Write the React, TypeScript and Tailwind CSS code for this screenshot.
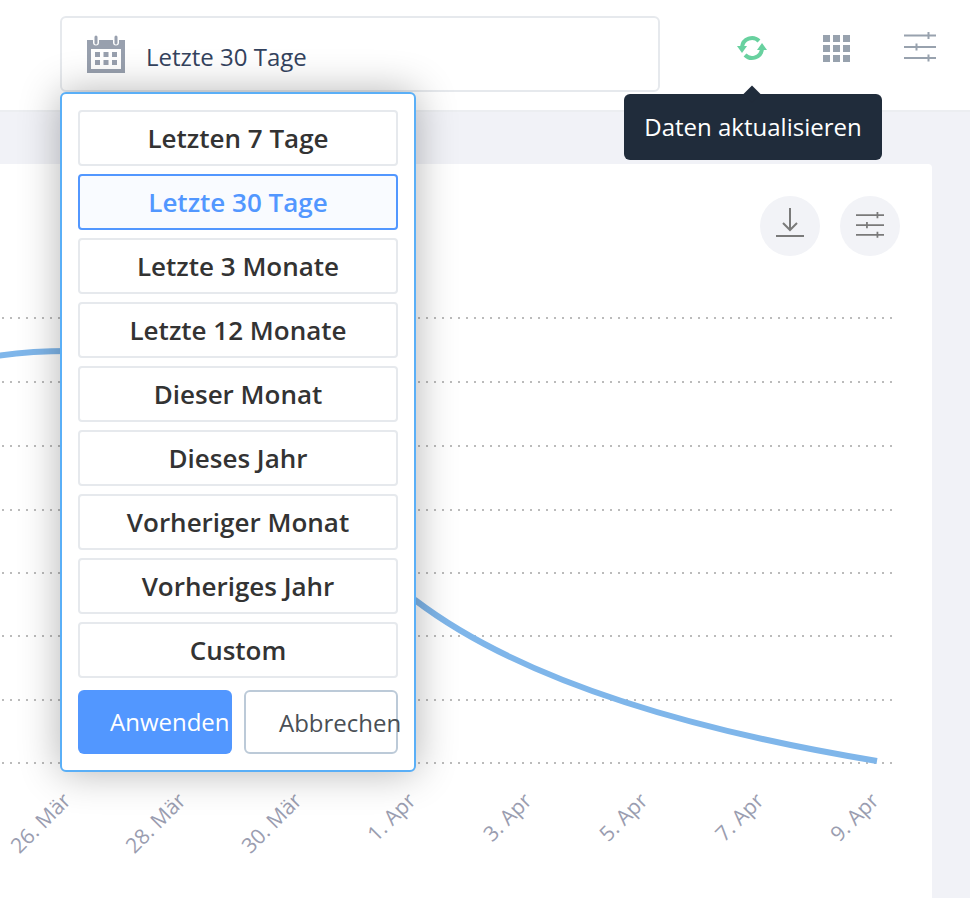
import React from 'react';

const presets = [
  'Letzten 7 Tage',
  'Letzte 30 Tage',
  'Letzte 3 Monate',
  'Letzte 12 Monate',
  'Dieser Monat',
  'Dieses Jahr',
  'Vorheriger Monat',
  'Vorheriges Jahr',
  'Custom',
];

const gridLines = [318, 382, 446, 510, 573, 636, 700, 763];

const ticks = [
  { label: '26. Mär', x: 72 },
  { label: '28. Mär', x: 187 },
  { label: '30. Mär', x: 303 },
  { label: '1. Apr', x: 417 },
  { label: '3. Apr', x: 533 },
  { label: '5. Apr', x: 649 },
  { label: '7. Apr', x: 765 },
  { label: '9. Apr', x: 880 },
];

const CalendarIcon = () => (
  <svg width="40" height="40" viewBox="0 0 40 40" className="shrink-0">
    <path d="M1 6h6v2.5a3 3 0 0 0 6 0V6h14v2.5a3 3 0 0 0 6 0V6h6v33H1z M5 15v20h30V15z" fill="#98a0ae" fillRule="evenodd" />
    <rect x="8.5" y="1.5" width="3" height="9" rx="1.5" fill="#98a0ae" />
    <rect x="28.5" y="1.5" width="3" height="9" rx="1.5" fill="#98a0ae" />
    <g fill="#98a0ae">
      <rect x="9" y="18" width="5" height="5" />
      <rect x="17.5" y="18" width="5" height="5" />
      <rect x="26" y="18" width="5" height="5" />
      <rect x="9" y="26" width="5" height="5" />
      <rect x="17.5" y="26" width="5" height="5" />
      <rect x="26" y="26" width="5" height="5" />
    </g>
  </svg>
);

const RefreshIcon = () => (
  <svg width="32" height="28" viewBox="0 0 32 28" fill="none">
    <path d="M6 13a10 10 0 0 1 17-6" stroke="#68d19f" strokeWidth="4" />
    <path d="M26 15a10 10 0 0 1-17 6" stroke="#68d19f" strokeWidth="4" />
    <path d="M1 12h10l-5 7z" fill="#68d19f" />
    <path d="M21 16h10l-5-7z" fill="#68d19f" />
  </svg>
);

const GridIcon = () => (
  <div className="grid grid-cols-3 gap-[3px]">
    {Array.from({ length: 9 }).map((_, i) => (
      <span key={i} className="size-[7px] bg-[#98a2ae]" />
    ))}
  </div>
);

const SlidersIcon = ({ color, width }: { color: string; width: number }) => (
  <svg width={width} height={width} viewBox="0 0 32 32" fill="none" stroke={color} strokeWidth="2">
    <path d="M0 3.5h32M0 15h32M0 26h32" />
    <path d="M24.5 0v7M12.5 11.5v7M24.5 22.5v7" />
  </svg>
);

const DownloadIcon = () => (
  <svg width="28" height="32" viewBox="0 0 28 32" fill="none" stroke="#7a7a7a" strokeWidth="2">
    <path d="M14 0v22M7 15l7 7 7-7" />
    <path d="M0 28h28" />
  </svg>
);

const Chart = () => (
  <svg width="932" height="642" viewBox="0 256 932 642" className="block">
    {gridLines.map(y => (
      <line
        key={y}
        x1="0"
        x2="892"
        y1={y}
        y2={y}
        stroke="#bbbbbb"
        strokeWidth="2"
        strokeDasharray="2 6"
        strokeDashoffset="-2"
      />
    ))}
    <path
      d="M-10 357C20 352 45 351 70 351C200 351 300 530 415 600C520 680 690 730 877 761"
      fill="none"
      stroke="#7fb6ea"
      strokeWidth="6"
    />
    {ticks.map(t => (
      <text
        key={t.label}
        x={t.x}
        y="802"
        textAnchor="end"
        transform={`rotate(-45 ${t.x} 802)`}
        fontSize="21"
        fill="#9a9db0"
      >
        {t.label}
      </text>
    ))}
  </svg>
);

export default function App() {
  return (
    <div className="relative flex h-[898px] w-[970px] flex-col overflow-hidden bg-white font-['Open_Sans',sans-serif]">
      <header className="flex h-[112px] shrink-0 items-start border-b-2 border-[#eceef1] bg-white pt-4">
        <div className="ml-[60px] flex h-[76px] w-[600px] items-center gap-5 rounded-md border-2 border-[#e6e9ed] pl-6">
          <CalendarIcon />
          <span className="pt-[6px] text-[24px] text-[#34435e]">Letzte 30 Tage</span>
        </div>
        <div className="ml-[76px] flex h-[64px] w-[32px] items-center justify-center">
          <RefreshIcon />
        </div>
        <div className="ml-[55px] flex h-[64px] items-center">
          <GridIcon />
        </div>
        <div className="ml-[54px] flex h-[64px] items-center">
          <SlidersIcon color="#98a2ae" width={32} />
        </div>
      </header>

      <main className="flex-1 bg-[#f1f2f7] pt-[52px] pr-[38px]">
        <section className="h-full rounded-tr bg-white">
          <div className="flex h-[92px] items-end justify-end gap-5 pr-[32px]">
            <button className="flex size-[60px] items-center justify-center rounded-full bg-[#f2f3f7] pb-1">
              <DownloadIcon />
            </button>
            <button className="flex size-[60px] items-center justify-center rounded-full bg-[#f2f3f7]">
              <SlidersIcon color="#7a7a7a" width={28} />
            </button>
          </div>
          <Chart />
        </section>
      </main>

      <div className="absolute top-[92px] left-[60px] flex w-[356px] flex-col gap-2 rounded-md border-2 border-[#5aaff7] bg-white p-4 shadow-[0_0_40px_rgba(0,0,0,0.3)]">
        {presets.map(p => (
          <button
            key={p}
            className={
              p === 'Letzte 30 Tage'
                ? 'h-[56px] rounded border-2 border-[#5297ff] bg-[#f9fbff] text-[26px] font-semibold text-[#5297ff]'
                : 'h-[56px] rounded border-2 border-[#e6e9ed] bg-white text-[26px] font-semibold text-[#333333]'
            }
          >
            {p}
          </button>
        ))}
        <div className="mt-1 flex gap-3">
          <button className="h-[64px] w-[154px] whitespace-nowrap rounded-md bg-[#5297ff] pl-8 text-left text-[24px] text-white">
            Anwenden
          </button>
          <button className="h-[64px] w-[154px] whitespace-nowrap rounded-md border-2 border-[#bccad8] bg-white pt-[2px] pl-[33px] text-left text-[24px] text-[#4a4f55]">
            Abbrechen
          </button>
        </div>
      </div>

      <div className="absolute top-[94px] left-[624px] flex h-[66px] w-[258px] items-center justify-center rounded-md bg-[#202c3b] text-[24px] text-white">
        Daten aktualisieren
        <span className="absolute -top-[6px] left-[122px] size-[12px] rotate-45 bg-[#202c3b]" />
      </div>
    </div>
  );
}
